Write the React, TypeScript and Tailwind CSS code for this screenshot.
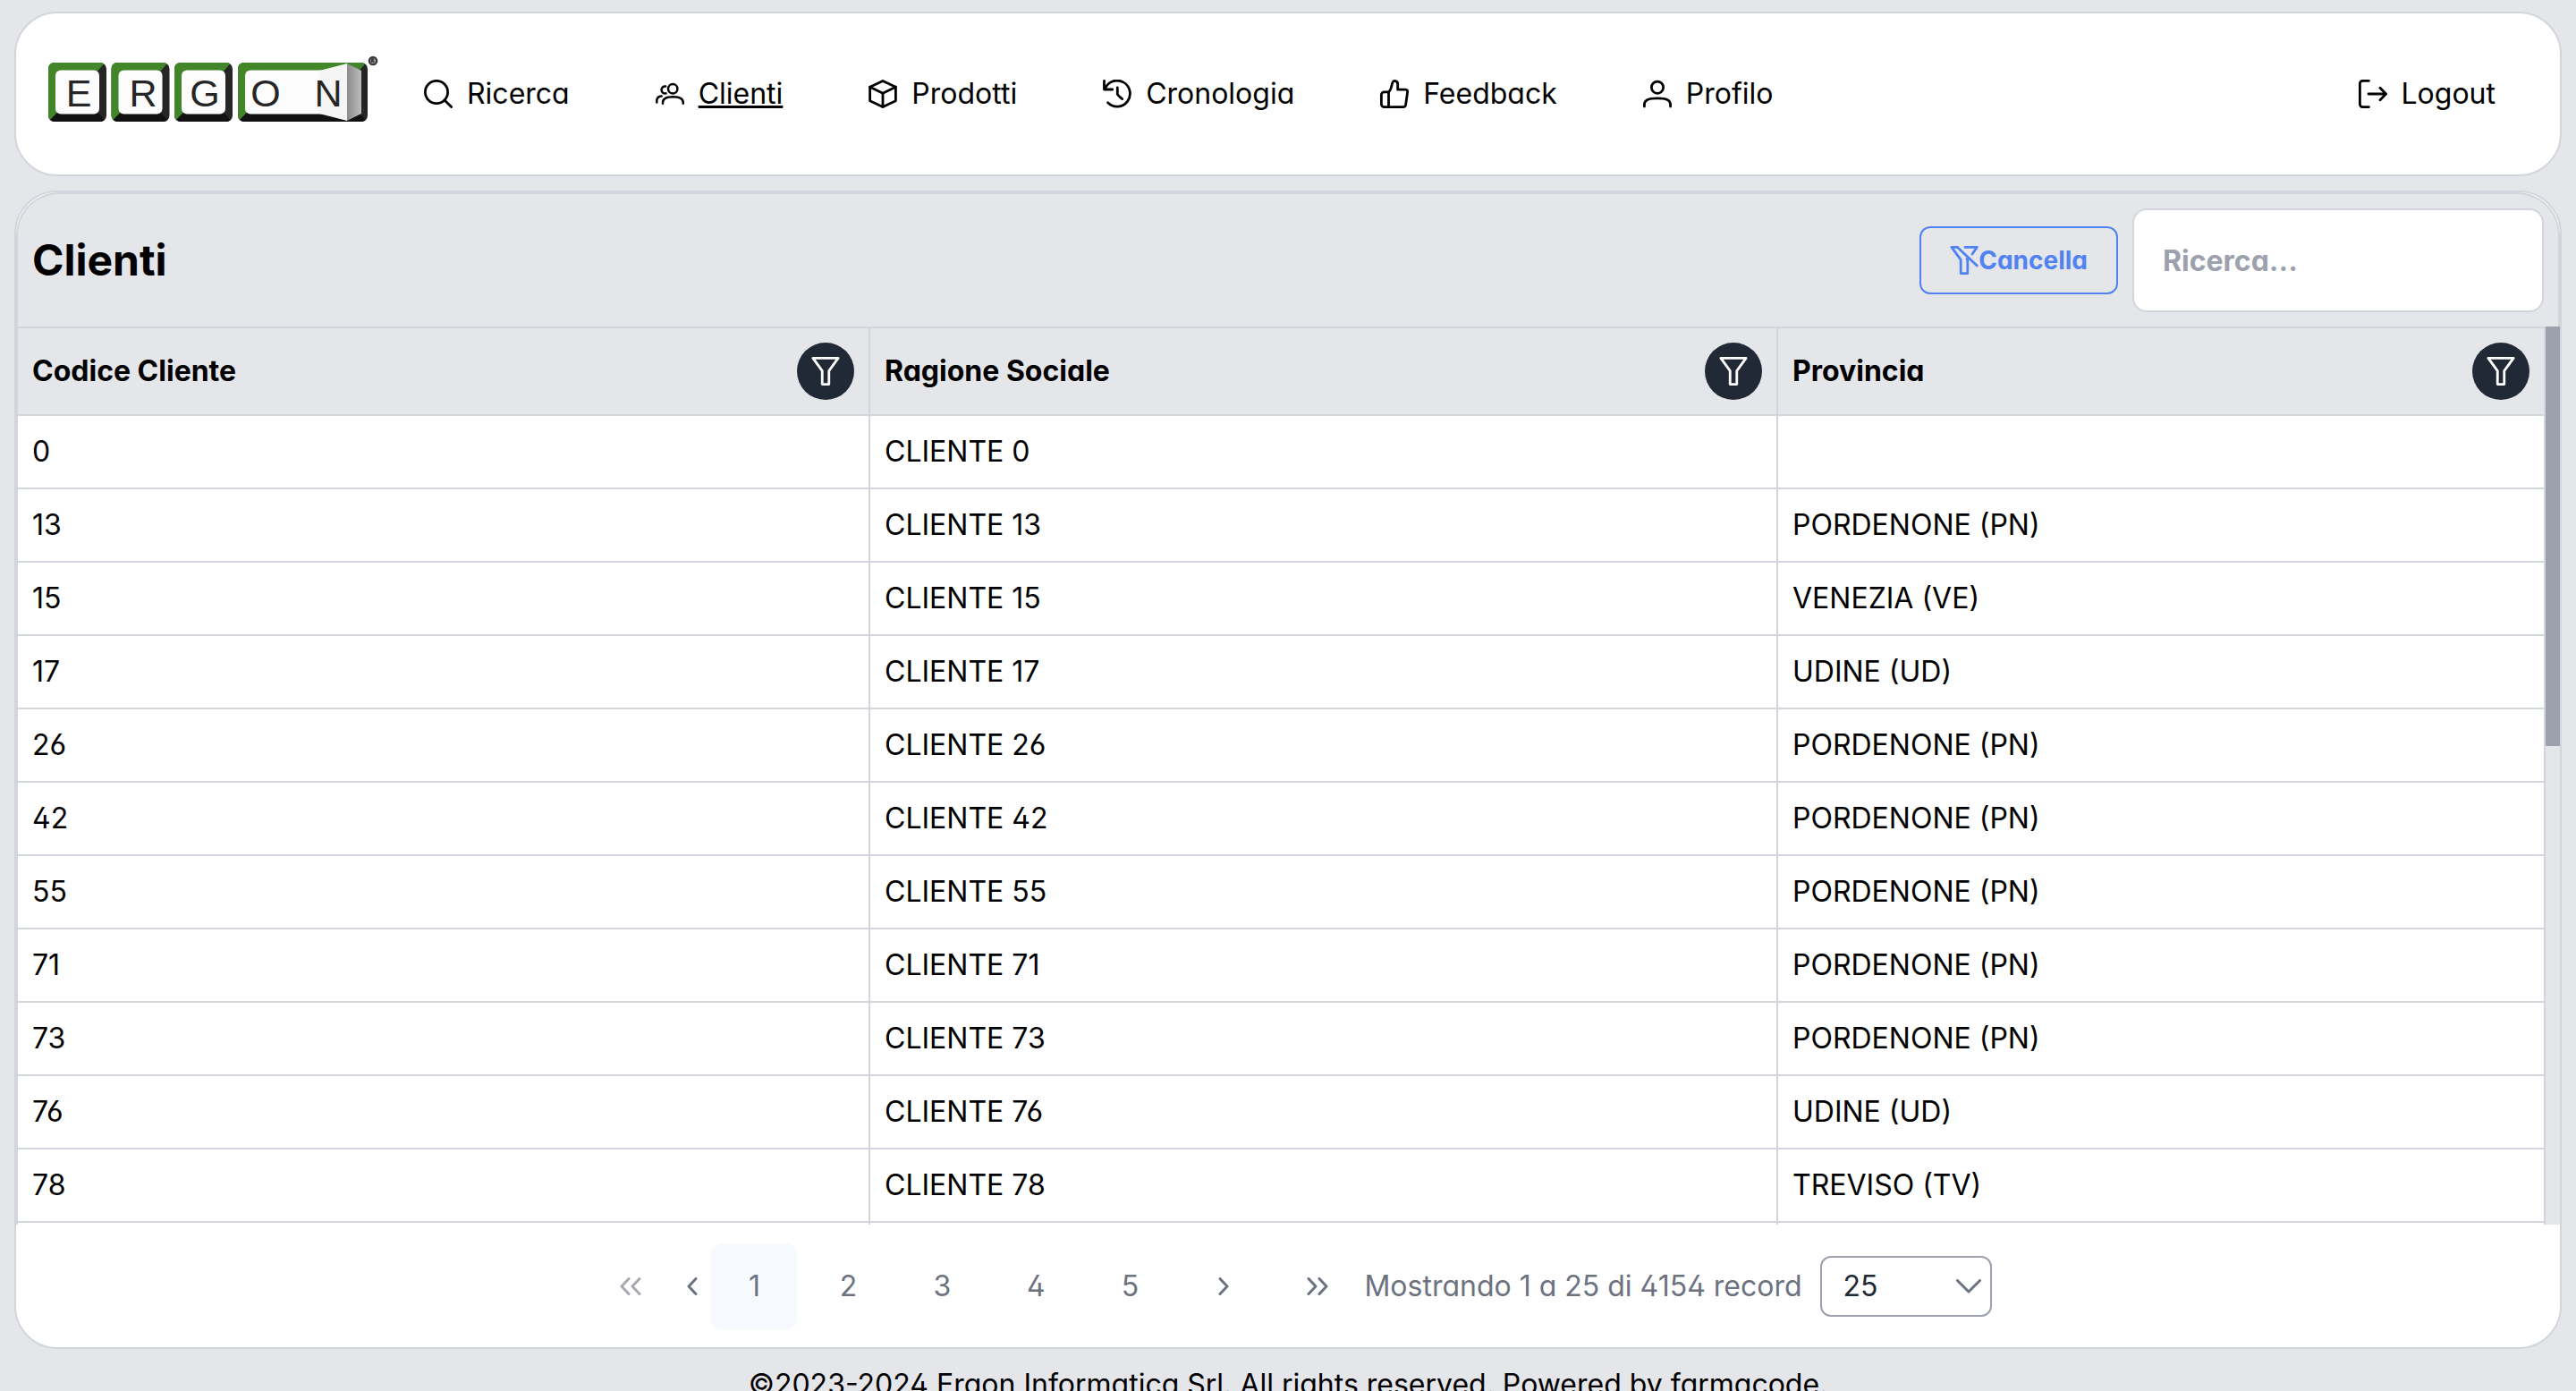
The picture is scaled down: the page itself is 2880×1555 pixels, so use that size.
import React from "react";

type IconProps = { className?: string };

function Stroke({ children, className }: { children: React.ReactNode; className?: string }) {
  return (
    <svg
      viewBox="0 0 32 32"
      className={className ?? "size-8 shrink-0"}
      fill="none"
      stroke="currentColor"
      strokeWidth="2.8"
      strokeLinecap="round"
      strokeLinejoin="round"
      aria-hidden="true"
    >
      {children}
    </svg>
  );
}

const SearchIcon = () => (
  <Stroke>
    <circle cx="14" cy="14" r="12.6" />
    <path d="M23 23 30.600 30.600" />
  </Stroke>
);

const UsersIcon = () => (
  <Stroke>
    <g strokeWidth="2.5">
      <circle cx="19.2" cy="10.3" r="5.2" />
      <path d="M8 26.8v-1.2c0-4.400 3.400-6.400 11.400-6.400s11.400 2 11.400 6.400v1.200" />
      <path d="M11.200 7.600a4 4 0 1 0 .4 7.800" />
      <path d="M1.300 25.600v-2c0-3 1.600-4.900 5.400-5.200" />
    </g>
  </Stroke>
);

const BoxIcon = () => (
  <Stroke>
    <path d="M16 1.400 30.400 8.200v15.600L16 30.600 1.600 23.800V8.200Z" />
    <path d="M1.600 8.200 16 15.200 30.400 8.200M16 15.200v15.400" />
  </Stroke>
);

const HistoryIcon = () => (
  <Stroke>
    <path d="M1.500 1.500v9.500h9.200" />
    <path d="M2.300 10.600A14.500 14.500 0 1 1 5.600 25.800" />
    <path d="M16.300 8.800v7.400c.5 1.600 3.400 3.700 5.400 5.400" />
  </Stroke>
);

const ThumbIcon = () => (
  <Stroke>
    <path d="M9.500 13.800C12.600 11.800 12.800 6 13.900 3.200c.9-2.600 5.800-2.500 5.800 1.800v6.200h8.600c1.600 0 2.500 1 2.300 2.600l-2 14.500c-.3 1.600-1.100 2.300-2.700 2.300H9.500Z" />
    <path d="M9.500 13.800H4.600c-1.800 0-3.200 1.300-3.200 3v10.800c0 1.700 1.400 3 3.200 3h4.900" />
  </Stroke>
);

const UserIcon = () => (
  <Stroke>
    <circle cx="16" cy="8.700" r="6.600" />
    <path d="M1.400 30v-1.600C1.400 22.600 6 20.800 16 20.800s14.600 1.800 14.600 7.600V30" />
  </Stroke>
);

const LogoutIcon = () => (
  <Stroke>
    <path d="M11.500 1.400H4.400a3 3 0 0 0-3 3v23.200a3 3 0 0 0 3 3h7.100" />
    <path d="M11 16h19.500M24 9.200l6.600 6.800-6.600 6.800" />
  </Stroke>
);

const FilterIcon = ({ className }: IconProps) => (
  <svg viewBox="0 0 14 14" className={className} fill="currentColor" aria-hidden="true">
    <path d="M8.64708 14H5.35296C5.18981 13.9979 5.03395 13.9321 4.91858 13.8167C4.8032 13.7014 4.73745 13.5455 4.73531 13.3824V7L0.329431 0.98C0.259794 0.889466 0.217389 0.780968 0.20718 0.667208C0.19697 0.553448 0.219379 0.439133 0.271783 0.337647C0.324282 0.236453 0.403423 0.151519 0.500663 0.0920138C0.597903 0.0325088 0.709548 0.000692754 0.823548 0H13.1765C13.2905 0.000692754 13.4021 0.0325088 13.4994 0.0920138C13.5966 0.151519 13.6758 0.236453 13.7283 0.337647C13.7807 0.439133 13.8031 0.553448 13.7929 0.667208C13.7826 0.780968 13.7402 0.889466 13.6706 0.98L9.26472 7V13.3824C9.26259 13.5455 9.19683 13.7014 9.08146 13.8167C8.96609 13.9321 8.81023 13.9979 8.64708 14ZM5.97061 12.7647H8.02943V6.79412C8.02878 6.66289 8.07229 6.53527 8.15296 6.43177L11.9412 1.23529H2.05884L5.86355 6.43177C5.94422 6.53527 5.98773 6.66289 5.98708 6.79412L5.97061 12.7647Z" />
  </svg>
);

const FilterSlashIcon = () => (
  <Stroke>
    <path d="M8.500 1.400H1.900L12.200 15.400V30.600H19.800V15.400L19 14.500" />
    <path d="M8.500 1.400 30.300 22M17 1.400H30.300L25 9" />
  </Stroke>
);

function Logo() {
  const keys = [
    { x: 0, w: 65 },
    { x: 70.5, w: 65 },
    { x: 141, w: 65 },
    { x: 212, w: 145 },
  ];
  return (
    <svg viewBox="0 0 369 76" className="h-19 w-[369px] shrink-0" role="img" aria-label="ERGON">
      <defs>
        <linearGradient id="side" x1="0" x2="1" y1="0" y2="0">
          <stop offset="0" stopColor="#8c8c8c" />
          <stop offset="1" stopColor="#bdbdbd" />
        </linearGradient>
      </defs>
      {keys.map(({ x, w }) => (
        <g key={x}>
          <rect x={x} y="8" width={w} height="66" rx="7" fill="#262626" />
          <path
            d={`M${x + w - 3} 9.5Q${x + w - 5} 8 ${x + w - 7} 8H${x + 7}Q${x} 8 ${x} 15V67Q${x} 70 ${x + 2} 72L${x + 14} 60V22H${x + w - 14}Z`}
            fill="#43862a"
          />
          <path
            d={`M${x + 2} 72L${x + 10} 64H${x + w - 10}L${x + w - 2} 72Q${x + w - 4} 74 ${x + w - 7} 74H${x + 7}Q${x + 4} 74 ${x + 2} 72Z`}
            fill="#111111"
          />
          <rect x={x + 8} y="16.500" width={w - 16} height="49" rx="6" fill="#fcfcfc" />
        </g>
      ))}
      <path d="M303 17 334 9V73L303 65Z" fill="#f5f5f5" />
      <path d="M334 9 350 17V65L334 73Z" fill="url(#side)" />
      <g fill="#262626" fontFamily='"Liberation Sans", Arial, sans-serif' fontSize="43" textAnchor="middle">
        <text x="34" y="57">E</text>
        <text x="106" y="57">R</text>
        <text x="175" y="57">G</text>
        <text x="243" y="57">O</text>
        <text x="313" y="57">N</text>
      </g>
      <circle cx="363" cy="6" r="4.200" fill="#9a9a9a" stroke="#3a3a3a" strokeWidth="2.200" />
      <path d="M361.500 8V4h2l-1 2 2 2" fill="none" stroke="#3a3a3a" strokeWidth="1.400" />
    </svg>
  );
}

const links = [
  { label: "Ricerca", Icon: SearchIcon },
  { label: "Clienti", Icon: UsersIcon, active: true },
  { label: "Prodotti", Icon: BoxIcon },
  { label: "Cronologia", Icon: HistoryIcon },
  { label: "Feedback", Icon: ThumbIcon },
  { label: "Profilo", Icon: UserIcon },
];

const rows = [
  ["0", ""],
  ["13", "PORDENONE (PN)"],
  ["15", "VENEZIA (VE)"],
  ["17", "UDINE (UD)"],
  ["26", "PORDENONE (PN)"],
  ["42", "PORDENONE (PN)"],
  ["55", "PORDENONE (PN)"],
  ["71", "PORDENONE (PN)"],
  ["73", "PORDENONE (PN)"],
  ["76", "UDINE (UD)"],
  ["78", "TREVISO (TV)"],
];

const columns = [
  { title: "Codice Cliente", width: "w-[33.77%]" },
  { title: "Ragione Sociale", width: "w-[35.89%]" },
  { title: "Provincia", width: "w-[30.34%]" },
];

const cell = "h-[82px] border-r-2 border-b-2 border-[#d2d5db] px-4 first:border-l-2";

function Chevron({ double = false, flip = false }: { double?: boolean; flip?: boolean }) {
  return (
    <svg
      viewBox={double ? "0 0 24 20" : "0 0 12 20"}
      className={(double ? "h-5 w-6" : "h-5 w-3") + (flip ? " rotate-180" : "")}
      fill="none"
      stroke="currentColor"
      strokeWidth="3"
      strokeLinecap="round"
      strokeLinejoin="round"
      aria-hidden="true"
    >
      <path d="M10 1.500 2 10l8 8.500" />
      {double && <path d="M22 1.500 14 10l8 8.500" />}
    </svg>
  );
}

const pageButton = "flex size-24 items-center justify-center rounded-xl";

export default function App() {
  return (
    <div className="h-screen overflow-hidden bg-[#e5e6ea] px-4 pt-[13px] font-['Inter',sans-serif] text-[32px] leading-[48px] text-black [font-feature-settings:'cv02','cv03','cv04','cv11']">
      <header className="mb-4 flex h-[184px] items-center rounded-[48px] border-2 border-[#d2d5db] bg-white pr-[72px] pl-9">
        <a href="#home" className="mr-[51px] pb-2.5">
          <Logo />
        </a>
        <nav className="flex grow items-center gap-24">
          {links.map(({ label, Icon, active }) => (
            <a key={label} href={`#${label.toLowerCase()}`} className="flex items-center gap-4">
              <Icon />
              <span className={active ? "underline" : ""}>{label}</span>
            </a>
          ))}
        </nav>
        <button type="button" className="flex items-center gap-4">
          <LogoutIcon />
          Logout
        </button>
      </header>

      <main className="overflow-hidden rounded-[48px] border-2 border-[#d2d5db] bg-white">
        <div className="flex items-center gap-4 rounded-t-[48px] border-x-2 border-t-2 border-[#d2d5db] bg-[#e5e6ea] p-4">
          <h1 className="grow text-[48px] leading-[60px] font-bold">Clienti</h1>
          <button
            type="button"
            className="flex h-19 items-center rounded-xl border-2 border-[#5083f0] px-8 text-[28px] font-bold text-[#5083f0]"
          >
            <FilterSlashIcon />
            Cancella
          </button>
          <input
            type="search"
            aria-label="Ricerca"
            placeholder="Ricerca..."
            className="h-29 w-[460px] rounded-2xl border-2 border-[#d2d5db] bg-white px-8 font-bold placeholder:text-[#9ca1ad]"
          />
        </div>

        <div className="flex h-[calc(100vh-551px)]">
          <div className="grow overflow-hidden">
            <table className="w-full table-fixed border-separate border-spacing-0 text-left">
              <thead>
                <tr>
                  {columns.map(({ title, width }) => (
                    <th
                      key={title}
                      scope="col"
                      className={`h-[100px] border-y-2 border-r-2 border-[#d2d5db] bg-[#e5e6ea] px-4 font-bold first:border-l-2 ${width}`}
                    >
                      <div className="flex items-center justify-between">
                        {title}
                        <button
                          type="button"
                          aria-label={`Filtra ${title}`}
                          className="flex size-16 items-center justify-center rounded-full bg-[#222936] text-white"
                        >
                          <FilterIcon className="size-8" />
                        </button>
                      </div>
                    </th>
                  ))}
                </tr>
              </thead>
              <tbody>
                {rows.map(([code, province]) => (
                  <tr key={code}>
                    <td className={cell}>{code}</td>
                    <td className={cell}>CLIENTE {code}</td>
                    <td className={cell}>{province}</td>
                  </tr>
                ))}
                <tr>
                  <td className={cell} />
                  <td className={cell} />
                  <td className={cell} />
                </tr>
              </tbody>
            </table>
          </div>
          <div className="w-4 shrink-0 bg-[#e5e6ea]">
            <div className="h-[46.7%] bg-[#9ca1ad]" />
          </div>
        </div>

        <div className="flex items-center justify-center pt-[21px] pb-5 pl-1 text-[#6c7280]">
          <div className="flex items-center gap-[9px]">
            <button type="button" aria-label="Prima pagina" disabled className={`${pageButton} opacity-60`}>
              <Chevron double />
            </button>
            <button type="button" aria-label="Pagina precedente" className="flex h-24 w-6 items-center justify-center">
              <Chevron />
            </button>
            {[1, 2, 3, 4, 5].map((n) => (
              <button key={n} type="button" className={n === 1 ? `${pageButton} bg-[#f6f9fe]` : pageButton}>
                {n}
              </button>
            ))}
            <button type="button" aria-label="Pagina successiva" className={pageButton}>
              <Chevron flip />
            </button>
            <button type="button" aria-label="Ultima pagina" className={pageButton}>
              <Chevron double flip />
            </button>
          </div>
          <span className="ml-1">Mostrando 1 a 25 di 4154 record</span>
          <div className="relative ml-5 flex items-center">
            <select
              aria-label="Record per pagina"
              defaultValue="25"
              className="h-17 w-48 appearance-none rounded-xl border-2 border-[#9ca1ad] bg-white px-6 text-[#222936]"
            >
              <option>25</option>
              <option>50</option>
              <option>100</option>
            </select>
            <svg
              viewBox="0 0 28 16"
              className="pointer-events-none absolute right-3 h-4 w-7"
              fill="none"
              stroke="currentColor"
              strokeWidth="3"
              strokeLinecap="round"
              strokeLinejoin="round"
              aria-hidden="true"
            >
              <path d="M1.500 1.500 14 14 26.500 1.500" />
            </svg>
          </div>
        </div>
      </main>

      <footer className="pt-4 text-center">
        ©2023-2024 Ergon Informatica Srl. All rights reserved. Powered by farmacode.
      </footer>
    </div>
  );
}
